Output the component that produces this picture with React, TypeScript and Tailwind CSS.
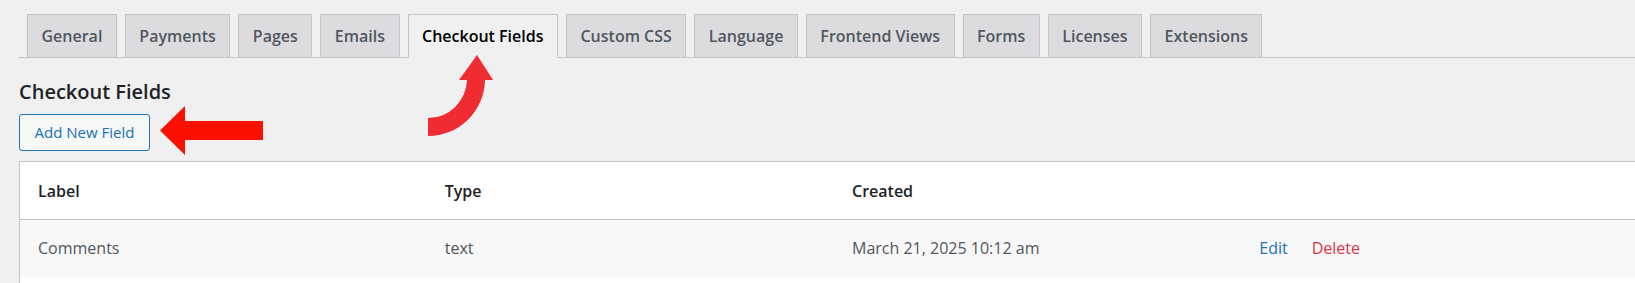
import React from 'react'

const tabs = [
  'General',
  'Payments',
  'Pages',
  'Emails',
  'Checkout Fields',
  'Custom CSS',
  'Language',
  'Frontend Views',
  'Forms',
  'Licenses',
  'Extensions',
]

const ACTIVE = 'Checkout Fields'

// Settings screen: tab strip, the checkout field list, and two red callout arrows on top.
export default function App() {
  return (
    <div
      className="relative h-[283px] w-full overflow-hidden bg-[#f0f0f1] text-[#1d2327]"
      style={{ fontFamily: '"Open Sans", "Noto Sans", sans-serif' }}
    >
      <div className="pl-[19px] pt-[14px]">
        <nav className="flex border-b border-[#c3c4c7]">
          {tabs.map((t) =>
            t === ACTIVE ? (
              <a
                key={t}
                className="-mb-px ml-[8px] flex h-[44px] items-center border border-[#c3c4c7] border-b-[#f0f0f1] bg-[#f0f0f1] px-[13.5px] text-[16px] font-semibold text-black"
              >
                {t}
              </a>
            ) : (
              <a
                key={t}
                className="-mb-px ml-[8px] flex h-[44px] items-center border border-[#c3c4c7] bg-[#dcdcde] px-[13.5px] text-[16px] font-semibold text-[#50575e]"
              >
                {t}
              </a>
            ),
          )}
        </nav>

        <h2 className="mt-[20px] text-[20px] leading-[28px] font-semibold text-[#1d2327]">Checkout Fields</h2>

        <button className="mt-[8px] flex h-[37px] w-[131px] items-center justify-center rounded-[3px] border border-[#2271b1] bg-[#f6f7f7] text-[15px] text-[#2271b1]">
          Add New Field
        </button>

        <table className="mt-[10px] w-[1630px] table-fixed border border-[#c3c4c7] bg-white text-left text-[16px]">
          <thead>
            <tr className="h-[58px] border-b border-[#c3c4c7]">
              <th className="pl-[18px] font-semibold text-[#1d2327]">Label</th>
              <th className="pl-[18px] font-semibold text-[#1d2327]">Type</th>
              <th className="pl-[18px] font-semibold text-[#1d2327]">Created</th>
              <th />
            </tr>
          </thead>
          <tbody>
            <tr className="h-[57px] bg-[#f8f8f8] text-[#50575e]">
              <td className="pl-[18px]">Comments</td>
              <td className="pl-[18px]">text</td>
              <td className="pl-[18px]">March 21, 2025 10:12 am</td>
              <td className="pl-[18px]">
                <span className="text-[#2271b1]">Edit</span>
                <span className="ml-[24px] text-[#dc3545]">Delete</span>
              </td>
            </tr>
            <tr className="h-[57px]">
              <td colSpan={4} />
            </tr>
          </tbody>
        </table>
      </div>

      <svg className="pointer-events-none absolute top-0 left-0" width="1635" height="283" viewBox="0 0 1635 283">
        <path d="M160 130.5 L185 106 L185 121 L263 121 L263 140 L185 140 L185 155 Z" fill="#fe1000" />
        <path d="M467 80 A39 39 0 0 1 428 118 L428 136 A57 57 0 0 0 485 80 Z" fill="#ee2c31" />
        <path d="M459 80 L493 80 L477 55 Z" fill="#ee2c31" />
      </svg>
    </div>
  )
}
